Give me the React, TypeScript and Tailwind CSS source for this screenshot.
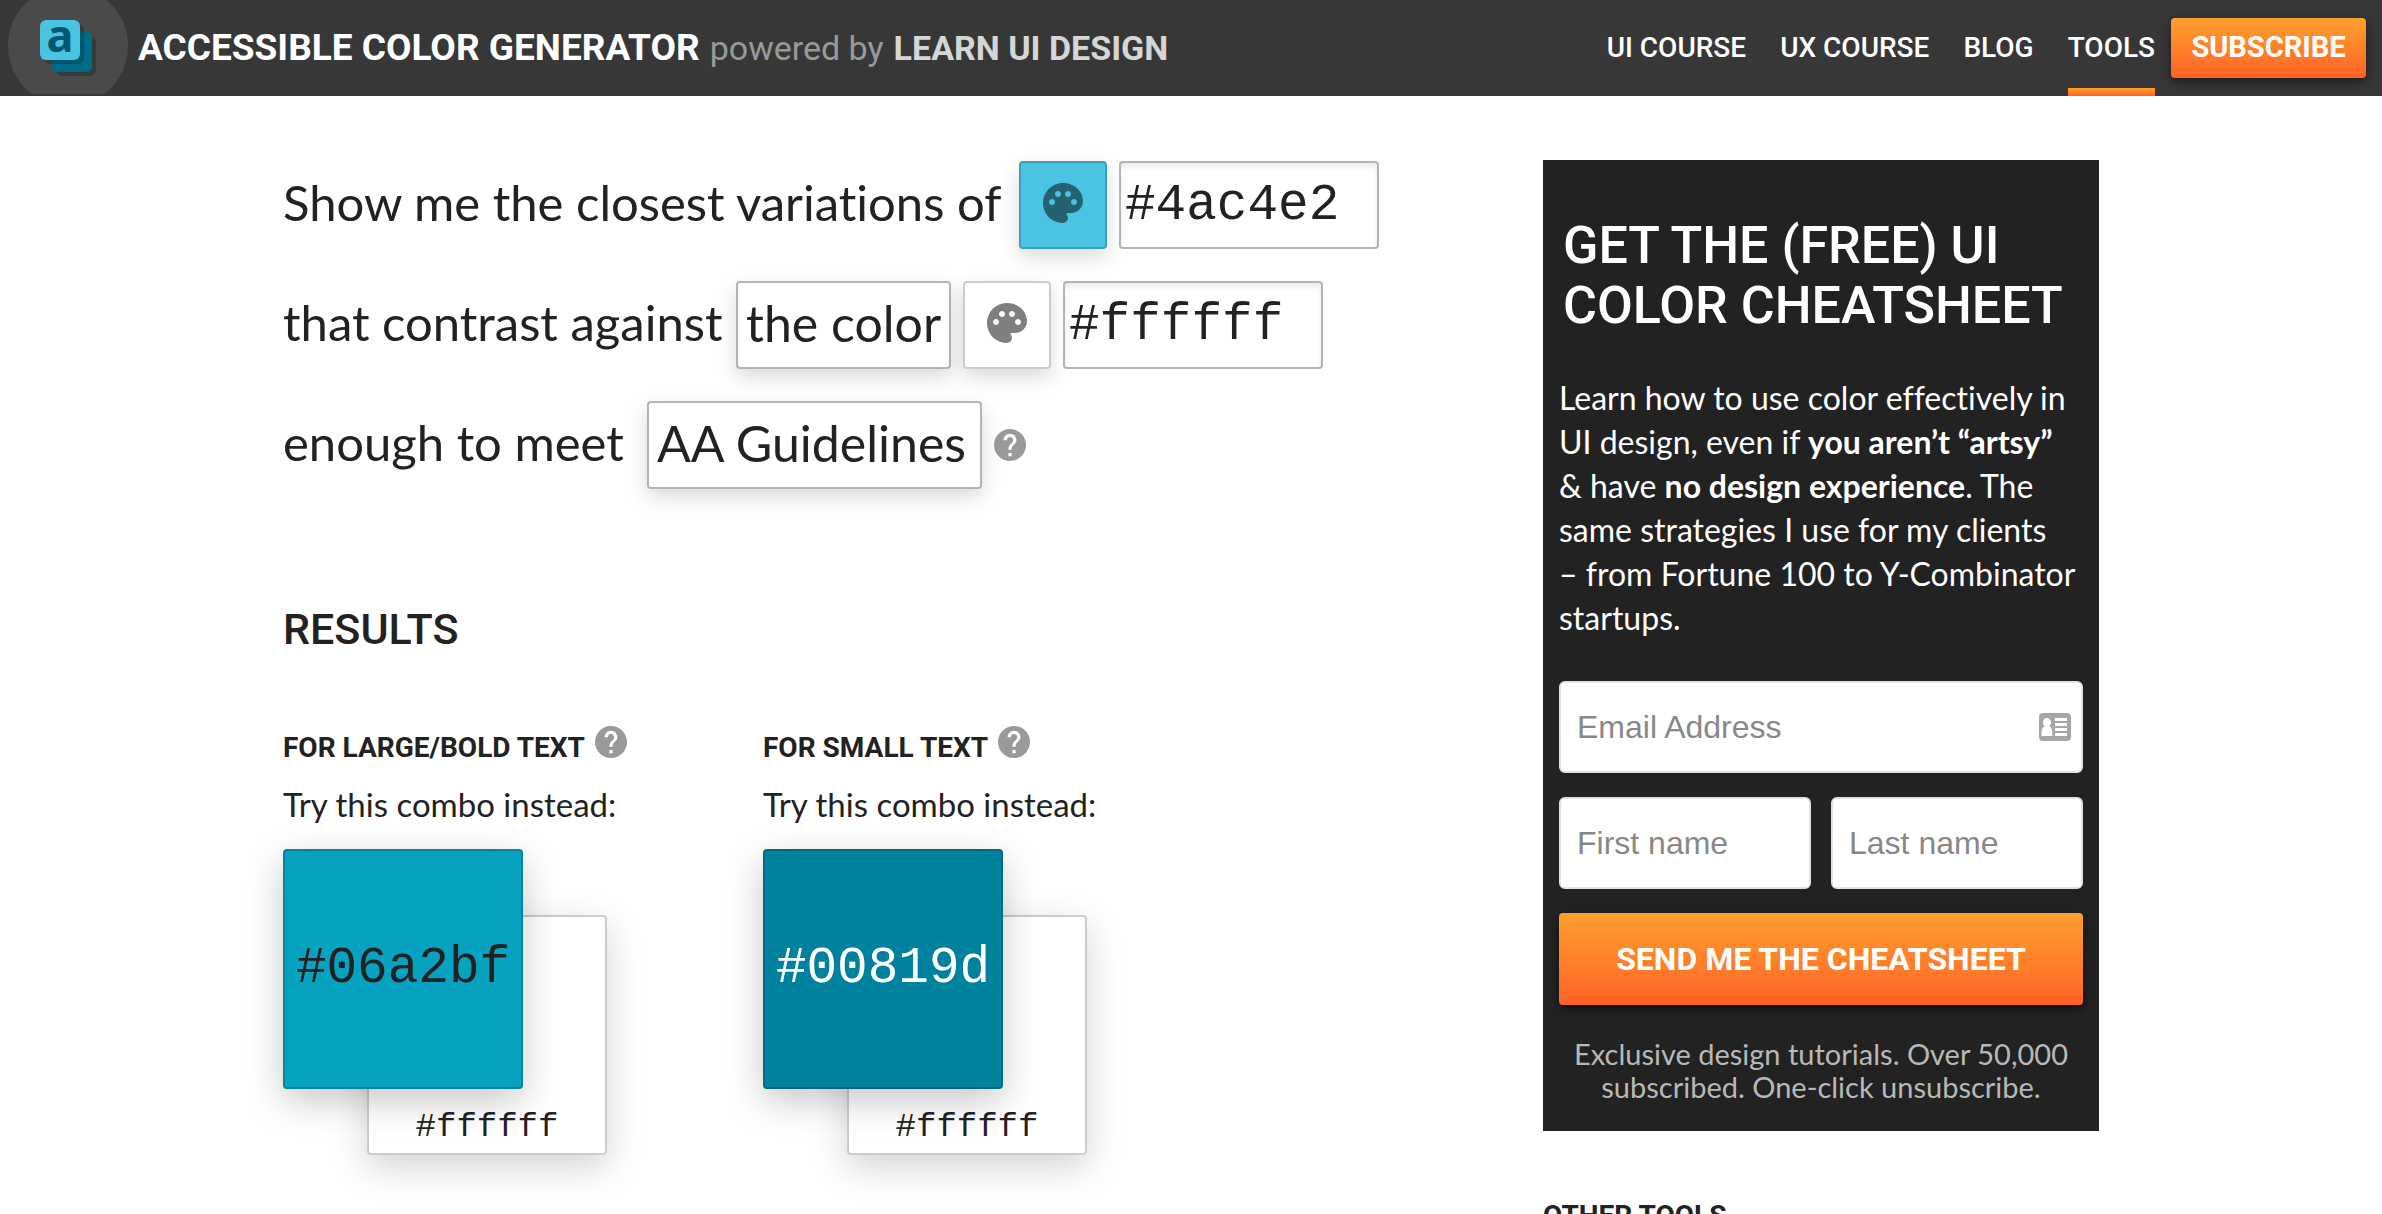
import { MdPalette } from "react-icons/md";

const heading = "font-['Roboto',sans-serif] uppercase";
const body = "font-['Lato',sans-serif] [font-variant-ligatures:no-common-ligatures]";
const mono = "font-['Liberation_Mono',monospace]";

function Logo() {
  return (
    <svg viewBox="0 0 120 96" className="ml-2 h-24 w-[120px] shrink-0 normal-case" aria-label="Accessible Color Generator logo">
      <defs>
        <clipPath id="disc">
          <rect width="120" height="94" />
        </clipPath>
        <clipPath id="back">
          <rect x="44" y="32" width="40" height="40" rx="6" />
        </clipPath>
      </defs>
      <circle cx="60" cy="46" r="60" fill="#4a4a4a" clipPath="url(#disc)" />
      <rect x="48" y="36" width="40" height="40" rx="6" fill="#3a3a3a" />
      <rect x="36" y="24" width="40" height="40" rx="6" fill="#3a3a3a" />
      <rect x="44" y="32" width="40" height="40" rx="6" fill="#006b87" />
      <rect x="36" y="24" width="40" height="40" rx="6" fill="#00566d" clipPath="url(#back)" />
      <rect x="32" y="20" width="40" height="40" rx="6" fill="#4ac4e2" />
      <text x="52" y="52" textAnchor="middle" fontFamily="Noto Sans, sans-serif" fontWeight="700" fontSize="45" fill="#005670">
        a
      </text>
    </svg>
  );
}

function Help({ label }: { label: string }) {
  return (
    <button type="button" aria-label={label} className="size-8 shrink-0 text-[#999999]">
      <svg viewBox="2 2 20 20" className="size-8" fill="currentColor">
        <path d="M12 2C6.48 2 2 6.48 2 12s4.48 10 10 10 10-4.48 10-10S17.52 2 12 2zm1 17h-2v-2h2v2zm2.07-7.75-.9.92C13.45 12.9 13 13.5 13 15h-2v-.5c0-1.1.45-2.1 1.17-2.83l1.24-1.26c.37-.36.59-.86.59-1.41 0-1.1-.9-2-2-2s-2 .9-2 2H8c0-2.21 1.79-4 4-4s4 1.79 4 4c0 .88-.36 1.68-.93 2.25z" />
      </svg>
    </button>
  );
}

function ColorButton({ tone, label }: { tone: string; label: string }) {
  return (
    <button
      type="button"
      aria-label={label}
      className={`flex size-[88px] shrink-0 items-center justify-center rounded border-2 pb-1 shadow-[0_8px_20px_rgba(0,0,0,0.15)] ${tone}`}
    >
      <MdPalette className="size-12 text-black/50" />
    </button>
  );
}

function HexInput({ value, label }: { value: string; label: string }) {
  return (
    <input
      aria-label={label}
      defaultValue={value}
      className={`h-[88px] w-[260px] rounded border-2 border-[#b3b3b3] bg-white pl-1 text-[51px] text-[#222222] shadow-[inset_0_4px_6px_rgba(0,0,0,0.08)] outline-none ${mono}`}
    />
  );
}

function Picker({ options, label, width }: { options: string[]; label: string; width: string }) {
  return (
    <select
      aria-label={label}
      className={`h-[88px] appearance-none rounded border-2 border-[#b3b3b3] bg-white px-2 pb-1 text-[50px] shadow-[0_8px_20px_rgba(0,0,0,0.15)] ${width}`}
    >
      {options.map((o) => (
        <option key={o}>{o}</option>
      ))}
    </select>
  );
}

function Result({ title, hex, tone }: { title: string; hex: string; tone: string }) {
  return (
    <section className="w-[480px]">
      <div className="flex h-[38px] gap-2.5">
        <h3 className={`self-end text-[28px] leading-8 font-bold ${heading}`}>{title}</h3>
        <Help label={`About ${title}`} />
      </div>
      <p className="mt-5 text-[33px] leading-10">Try this combo instead:</p>
      <div className="relative mt-[25px] h-[306px] w-[324px]">
        <div
          className={`absolute right-0 bottom-0 flex size-60 items-end justify-center rounded border-2 border-[#cccccc] bg-white pb-1.5 text-[34px] leading-10 shadow-[0_12px_36px_rgba(0,0,0,0.18)] ${mono}`}
        >
          #ffffff
        </div>
        <div
          className={`absolute top-0 left-0 flex size-60 items-center justify-center rounded border-2 text-[51px] shadow-[0_12px_36px_rgba(0,0,0,0.22)] ${mono} ${tone}`}
        >
          {hex}
        </div>
      </div>
    </section>
  );
}

function Field({ label, type = "text" }: { label: string; type?: string }) {
  return (
    <input
      type={type}
      aria-label={label}
      placeholder={label}
      className="h-[92px] w-full min-w-0 rounded-md border-2 border-[#e2e2e2] bg-white px-4 font-['Liberation_Sans',sans-serif] text-[32px] text-[#222222] outline-none placeholder:text-[#888888]"
    />
  );
}

const links = ["UI Course", "UX Course", "Blog", "Tools"];

export default function App() {
  return (
    <div className={`min-h-screen bg-white text-[#222222] ${body}`}>
      <header className={`flex h-24 items-center justify-between bg-[#373737] pr-4 ${heading}`}>
        <div className="flex items-center">
          <Logo />
          <div className="ml-2.5 flex items-baseline gap-2.5 leading-10">
            <a href="#" className="text-[37px] font-bold text-white">Accessible Color Generator</a>
            <span className="text-[34px] text-[#999999] normal-case">powered by</span>
            <a href="#" className="text-[34px] font-bold text-[#d6d6d6]">Learn UI Design</a>
          </div>
        </div>
        <nav className="flex h-full items-center gap-[34px] text-[28px] font-medium text-white">
          {links.map((l) => (
            <a key={l} href="#" className="relative flex h-full items-center">
              {l}
              {l === "Tools" && (
                <span className="absolute inset-x-0 bottom-0 h-2 bg-linear-to-b from-[#ff9f2e] to-[#ff6127]" />
              )}
            </a>
          ))}
          <button
            type="button"
            className="-ml-[18px] h-[60px] w-[195px] rounded bg-linear-to-b from-[#ff9f2e] to-[#ff6127] text-[29px] font-bold uppercase shadow-[0_4px_10px_rgba(0,0,0,0.5)]"
          >
            Subscribe
          </button>
        </nav>
      </header>

      <div className="mx-auto flex max-w-[1816px] items-start justify-between pt-16">
        <main>
          <form className="flex flex-col gap-8 pt-px text-[49px]">
            <div className="flex items-center gap-3">
              <span className="min-w-[724px] pb-1 whitespace-nowrap">Show me the closest variations of</span>
              <ColorButton label="Pick base color" tone="border-[#3a9fb9] bg-[#4ac4e2]" />
              <HexInput label="Base color" value="#4ac4e2" />
            </div>
            <div className="flex items-center gap-3">
              <span className="min-w-[441px] pb-1 whitespace-nowrap">that contrast against</span>
              <Picker label="Contrast target" options={["the color"]} width="w-[215px]" />
              <ColorButton label="Pick contrast color" tone="border-[#cccccc] bg-white" />
              <HexInput label="Contrast color" value="#ffffff" />
            </div>
            <div className="flex items-center gap-3">
              <span className="min-w-[352px] pb-1 whitespace-nowrap">enough to meet</span>
              <Picker label="Guideline level" options={["AA Guidelines", "AAA Guidelines"]} width="w-[335px]" />
              <Help label="About the guidelines" />
            </div>
          </form>

          <h2 className={`mt-[116px] text-[43px] leading-12 font-medium ${heading}`}>Results</h2>
          <div className="mt-[73px] flex">
            <Result title="For Large/Bold Text" hex="#06a2bf" tone="border-[#05849c] bg-[#06a2bf] text-[#222222]" />
            <Result title="For Small Text" hex="#00819d" tone="border-[#006a81] bg-[#00819d] text-white" />
          </div>
        </main>

        <aside className="w-[556px] shrink-0">
          <section className="bg-[#222222] px-4 pt-14 pb-7 text-white">
            <h2 className={`pl-1 text-[52px] leading-[60px] font-medium ${heading}`}>Get the (free) UI Color Cheatsheet</h2>
            <p className="mt-10 text-[32px] leading-11">
              Learn how to use color effectively in UI design, even if <strong>you aren’t “artsy”</strong> &amp; have{" "}
              <strong>no design experience</strong>. The same strategies I use for my clients{" "}
              <span className="whitespace-nowrap">– from</span> Fortune 100 to Y-Combinator startups.
            </p>
            <form className="mt-[41px] grid grid-cols-2 gap-x-5 gap-y-6">
              <div className="relative col-span-2">
                <Field label="Email Address" type="email" />
                <svg viewBox="0 0 32 28" className="absolute top-8 right-3 h-7 w-8" aria-hidden="true">
                  <rect width="32" height="28" rx="4" fill="#a6a6a6" />
                  <path
                    d="M8 5c2.400 0 4 1.800 4 4.300 0 1.700-.7 3.200-1.700 4 2.300.8 3.200 3.200 3.200 9.700h-11c0-6.500.9-8.900 3.200-9.700C4.700 12.500 4 11 4 9.300 4 6.800 5.600 5 8 5z"
                    fill="#fff"
                  />
                  <path d="M16 5h12v3H16zM16 10h12v3H16zM16 15h12v3H16zM16 20h12v3H16z" fill="#fff" />
                </svg>
              </div>
              <Field label="First name" />
              <Field label="Last name" />
              <button
                type="submit"
                className={`col-span-2 h-[92px] rounded bg-linear-to-b from-[#ff9f2e] to-[#ff6127] text-[32px] font-bold shadow-[0_4px_10px_rgba(0,0,0,0.5)] ${heading}`}
              >
                Send me the cheatsheet
              </button>
            </form>
            <p className="mt-8 text-center text-[29px] leading-[33px] text-[#b8b8b8]">
              Exclusive design tutorials. Over 50,000 subscribed. One-click unsubscribe.
            </p>
          </section>
          <h3 className={`mt-[69px] text-[28px] leading-8 font-bold ${heading}`}>Other Tools</h3>
        </aside>
      </div>
    </div>
  );
}
